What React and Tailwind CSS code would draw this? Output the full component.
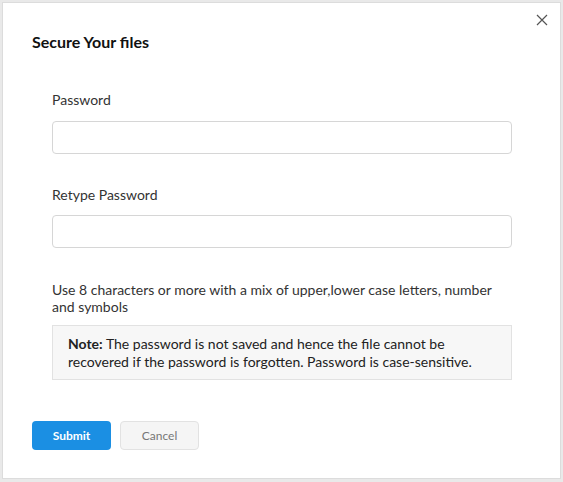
import React from "react";

export default function App() {
  return (
    <div className="w-[563px] h-[482px] bg-[#e9e9e9] p-[2px] pb-[3px] overflow-hidden" style={{ fontFamily: "Lato, 'Open Sans', sans-serif" }}>
      <div className="relative w-full h-full bg-white border border-[#dcdcdc] pt-[29px] pl-[29px] pr-[28px]">
        <button className="absolute right-[12px] top-[11px] w-[12px] h-[12px] text-[#555]">
          <svg viewBox="0 0 12 12" width="12" height="12" stroke="currentColor" strokeWidth="1.2" fill="none">
            <path d="M1 1 L11 11 M11 1 L1 11" />
          </svg>
        </button>
        <h1 className="text-[16px] font-bold text-[#111] leading-[20px]">Secure Your files</h1>
        <div className="px-[20px] mt-[39px]">
          <label className="block text-[14px] text-[#333] leading-[18px]">Password</label>
          <input type="password" className="mt-[12px] block w-full h-[33px] border border-[#d6d6d6] rounded-[4px] outline-none" />
          <label className="block mt-[32px] text-[14px] text-[#333] leading-[18px]">Retype Password</label>
          <input type="password" className="mt-[11px] block w-full h-[33px] border border-[#d6d6d6] rounded-[4px] outline-none" />
          <p className="mt-[33px] text-[14px] text-[#333] leading-[17px]">
            Use 8 characters or more with a mix of upper,lower case letters, number and symbols
          </p>
          <div className="mt-[10px] bg-[#f7f7f7] border border-[#e2e2e2] px-[15px] pt-[9px] pb-[8px] text-[14px] text-[#222] leading-[18px]">
            <span className="font-bold">Note:</span> The password is not saved and hence the file cannot be recovered if the password is forgotten. Password is case-sensitive.
          </div>
        </div>
        <div className="flex gap-[9px] mt-[41px]">
          <button className="w-[79px] h-[29px] rounded-[4px] bg-[#1b8fe3] text-white text-[12px] font-bold">Submit</button>
          <button className="w-[79px] h-[29px] rounded-[4px] bg-[#f5f5f5] border border-[#e2e2e2] text-[#777] text-[12px]">Cancel</button>
        </div>
      </div>
    </div>
  );
}
